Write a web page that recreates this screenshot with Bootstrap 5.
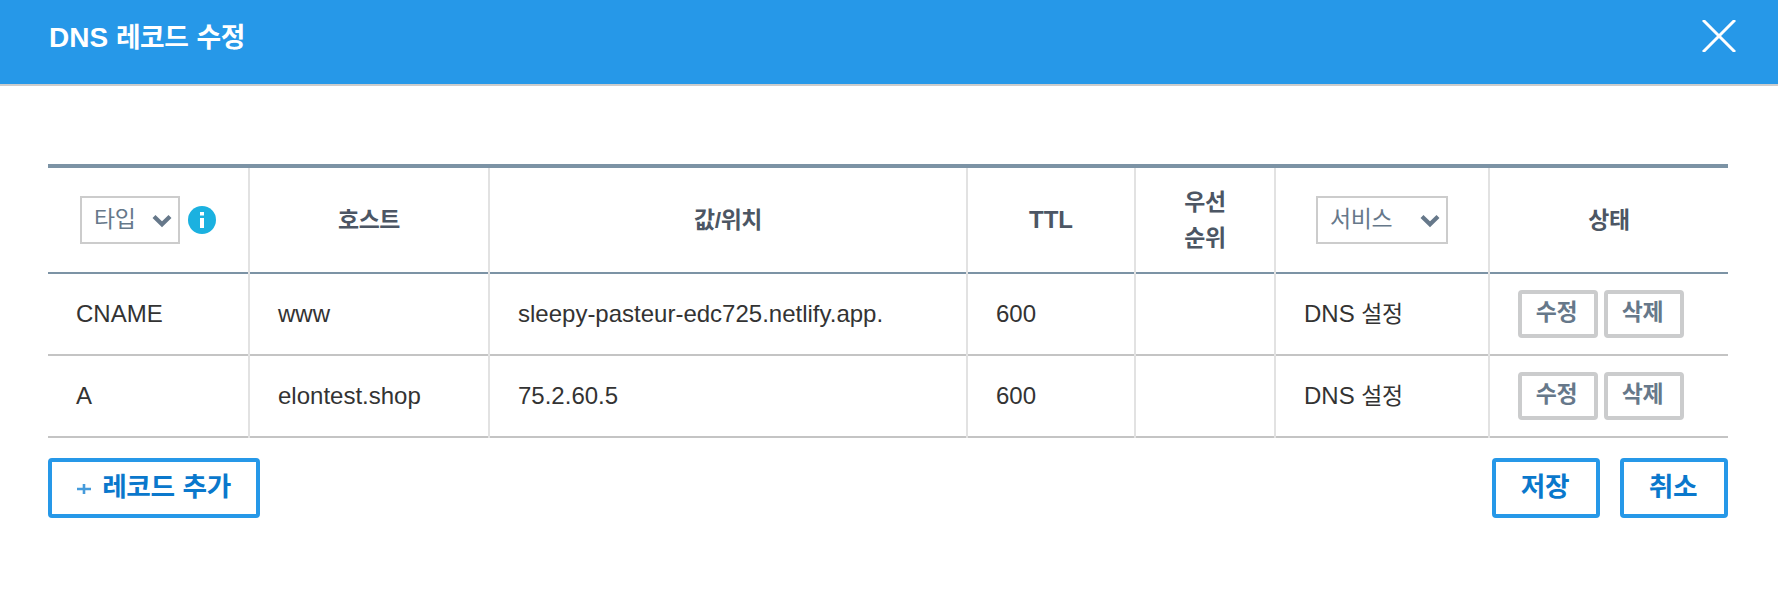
<!DOCTYPE html>
<html lang="ko">
<head>
<meta charset="utf-8">
<meta name="viewport" content="width=device-width, initial-scale=1">
<title>DNS 레코드 수정</title>
<link rel="stylesheet" href="https://cdn.jsdelivr.net/npm/bootstrap@5.3.0/dist/css/bootstrap.min.css">
<style>
body{font-family:"Liberation Sans","Noto Sans CJK KR",sans-serif;font-size:24px;line-height:36px;color:#333;background:#fff}
.ko{font-size:.955em;letter-spacing:-.016em;word-spacing:.04em}
.dialog-head{height:86px;background:#2698e8;border-bottom:2px solid #ccc;padding:20px 42px 0 49px}
.dialog-title{font-size:28px;line-height:36px;font-weight:700}
.close-btn{width:34px;height:32px}
.dialog-main{padding:78px 50px 0 48px}
.dns-table{table-layout:fixed;width:1680px;border-collapse:separate;border-spacing:0;border-top:4px solid #7c93a5;color:#333;--bs-table-color:#333}
.dns-table>:not(caption)>*>*{padding:0 28px 2px;border:0 solid #e2e2e2;box-shadow:inset 0 -2px 0 #c4c4c4;vertical-align:middle}
.dns-table>tbody>tr>td{height:82px}
.dns-table>thead>tr>th{height:106px;padding:0 0 2px;box-shadow:inset 0 -2px 0 #7c93a5;color:#4c5664;text-align:center}
.dns-table>:not(caption)>*>:not(:last-child){border-right-width:2px}
.filter-box{height:48px;border:2px solid #ccc;border-radius:0;background:#fff;color:#66788a;font-weight:400;padding:0 6px 2px 12px;line-height:36px}
.type-box{width:100px}
.service-box{width:132px}
.row-btns{gap:6px}
.row-btn{width:80px;height:48px;border:4px solid #cbcccd;border-radius:4px;color:#66788a;font-size:22.9px;font-weight:700;line-height:36px;padding:0 3px 4px 0}
.main-btn{height:60px;width:108px;border:4px solid #2698e8;border-radius:4px;color:#0a78cc;font-size:26.7px;font-weight:700;line-height:36px;padding:0 2px 3px 0}
.add-btn{width:212px;padding-left:2px}
.plus-icon{margin:4px 11px 0 0}
.footer-bar{margin-top:20px}
.footer-actions{gap:20px}
</style>
</head>
<body>
<header class="dialog-head d-flex justify-content-between align-items-start">
  <h1 class="dialog-title text-white m-0">DNS <span class="ko">레코드 수정</span></h1>
  <button class="close-btn btn p-0 border-0 d-flex" type="button" aria-label="닫기">
    <svg width="34" height="32" viewBox="0 0 34 32" stroke="#fff" stroke-width="3"><path d="M1 0 33 32M33 0 1 32"/></svg>
  </button>
</header>
<main class="dialog-main">
  <table class="table dns-table mb-0">
    <colgroup><col style="width:202px"><col style="width:240px"><col style="width:478px"><col style="width:168px"><col style="width:140px"><col style="width:214px"><col style="width:238px"></colgroup>
    <thead>
      <tr>
        <th><div class="d-flex align-items-center justify-content-center gap-2">
          <button class="filter-box type-box d-flex align-items-center justify-content-between" type="button"><span class="ko">타입</span>
            <svg class="mt-1" width="20" height="14" viewBox="0 0 20 14" fill="none" stroke="#66788a" stroke-width="4.2"><path d="M2 2.5 10 10.3 18 2.5"/></svg></button>
          <svg width="28" height="28" viewBox="0 0 28 28"><circle cx="14" cy="14" r="14" fill="#1bb1e0"/><path d="M12 6h4v3.5h-4zM12 12h4v10h-4z" fill="#fff"/></svg>
        </div></th>
        <th><span class="ko">호스트</span></th>
        <th><span class="ko">값/위치</span></th>
        <th>TTL</th>
        <th><span class="ko">우선<br>순위</span></th>
        <th><div class="d-flex justify-content-center">
          <button class="filter-box service-box d-flex align-items-center justify-content-between" type="button"><span class="ko">서비스</span>
            <svg class="mt-1" width="20" height="14" viewBox="0 0 20 14" fill="none" stroke="#66788a" stroke-width="4.2"><path d="M2 2.5 10 10.3 18 2.5"/></svg></button>
        </div></th>
        <th><span class="ko">상태</span></th>
      </tr>
    </thead>
    <tbody>
      <tr>
        <td>CNAME</td><td>www</td><td>sleepy-pasteur-edc725.netlify.app.</td><td>600</td><td></td><td>DNS <span class="ko">설정</span></td>
        <td><div class="row-btns d-flex"><button class="btn ko row-btn" type="button">수정</button><button class="btn ko row-btn" type="button">삭제</button></div></td>
      </tr>
      <tr>
        <td>A</td><td>elontest.shop</td><td>75.2.60.5</td><td>600</td><td></td><td>DNS <span class="ko">설정</span></td>
        <td><div class="row-btns d-flex"><button class="btn ko row-btn" type="button">수정</button><button class="btn ko row-btn" type="button">삭제</button></div></td>
      </tr>
    </tbody>
  </table>
  <div class="footer-bar d-flex justify-content-between">
    <button class="btn ko main-btn add-btn d-flex align-items-center justify-content-center" type="button">
      <svg class="plus-icon" width="14" height="12" viewBox="0 0 14 12" fill="none" stroke="#459bdb" stroke-width="2.6"><path d="M0 6h14M7 1v10"/></svg>레코드 추가</button>
    <div class="footer-actions d-flex">
      <button class="btn ko main-btn" type="button">저장</button>
      <button class="btn ko main-btn" type="button">취소</button>
    </div>
  </div>
</main>
<script src="https://cdn.jsdelivr.net/npm/bootstrap@5.3.0/dist/js/bootstrap.bundle.min.js"></script>
</body>
</html>
